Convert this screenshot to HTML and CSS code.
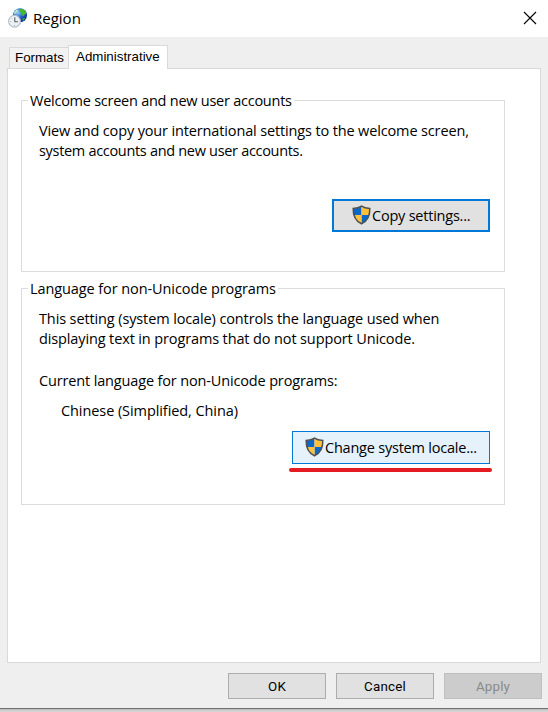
FILE: index.html
```html
<!DOCTYPE html>
<html lang="en">
<head>
<meta charset="utf-8">
<title>Region</title>
<link rel="stylesheet" href="styles.css">
</head>
<body>
<svg width="0" height="0" class="defs" aria-hidden="true">
  <defs>
    <clipPath id="shield-clip"><path d="M9.500 1.200C7.500 2.700 4.500 3.500 1.200 3.500C1 10.500 3 15.800 9.500 18.800C16 15.800 18 10.500 17.800 3.500C14.500 3.500 11.500 2.700 9.500 1.200Z"/></clipPath>
    <symbol id="shield" viewBox="0 0 19 20">
      <g clip-path="url(#shield-clip)">
        <path fill="#0b67c9" d="M0 0h9.500v10H0zM9.500 10H19v10H9.500z"/>
        <path fill="#ffc03c" d="M9.500 0H19v10H9.500zM0 10h9.500v10H0z"/>
      </g>
      <path fill="none" stroke="#4e5052" stroke-width="1.500" d="M9.500 1.200C7.500 2.700 4.500 3.500 1.200 3.500C1 10.500 3 15.800 9.500 18.800C16 15.800 18 10.500 17.800 3.500C14.500 3.500 11.500 2.700 9.500 1.200Z"/>
    </symbol>
  </defs>
</svg>
<div class="window">
  <header class="titlebar">
    <svg class="app-icon" viewBox="0 0 20 20" width="20" height="20">
      <defs>
        <radialGradient id="sea" cx=".35" cy=".3" r=".75"><stop offset="0" stop-color="#8fd0f5"/><stop offset=".5" stop-color="#2465cf"/><stop offset="1" stop-color="#102a86"/></radialGradient>
      </defs>
      <circle cx="12" cy="7.300" r="7" fill="url(#sea)"/>
      <path fill="#48b838" d="M12 .9c2.500-.4 4.500.7 5.600 2.500l.8 2.500-1.600.4-1.400 2-1.700-1.200-.3-2.200-1.900-1.200.5-1.400z"/>
      <path fill="#b5e5d0" d="M6 4.500l2.500-2.800 2 .3-1.700 2.500-2.300 2z"/>
      <path fill="#39a24a" d="M14 11l2-1.200 1.200.6-2 2.600z"/>
      <circle cx="6.500" cy="13.200" r="5.900" fill="#edf1f4" stroke="#b3bdc4" stroke-width="1.100"/>
      <path fill="none" stroke="#56626b" stroke-width="1.100" d="M6.800 9.200v4.500h3.200"/>
      <path fill="none" stroke="#94a0a8" stroke-width=".8" d="M2.200 13.400h1M6.500 17v1M3.500 10l.6.600"/>
    </svg>
    <h1 class="title"><span class="t-title">Region</span></h1>
    <svg class="close" viewBox="0 0 14 14" width="14" height="14"><path d="M1 1l12 12M13 1L1 13"/></svg>
  </header>
  <nav class="tabs">
    <div class="tab t-formats">Formats</div>
    <div class="tab active t-admin">Administrative</div>
  </nav>
  <main class="page">
    <section class="group welcome">
      <h2 class="legend t-l1">Welcome screen and new user accounts</h2>
      <p><span class="t-view">View and copy your international settings to the welcome screen,</span><br><span class="t-sys">system accounts and new user accounts.</span></p>
      <div class="action"><button class="btn focus"><svg width="19" height="20"><use href="#shield"/></svg><span class="t-copy">Copy settings...</span></button></div>
    </section>
    <section class="group language">
      <h2 class="legend t-l2">Language for non-Unicode programs</h2>
      <p><span class="t-this">This setting (system locale) controls the language used when</span><br><span class="t-disp">displaying text in programs that do not support Unicode.</span></p>
      <p class="current"><span class="t-cur">Current language for non-Unicode programs:</span></p>
      <p class="value"><span class="t-chi">Chinese (Simplified, China)</span></p>
      <div class="action"><button class="btn hover"><svg width="19" height="20"><use href="#shield"/></svg><span class="t-change">Change system locale...</span></button></div>
      <div class="marker"></div>
    </section>
  </main>
  <footer class="footer">
    <button class="cmd">OK</button>
    <button class="cmd">Cancel</button>
    <button class="cmd" disabled>Apply</button>
  </footer>
</div>
<div class="shadow"></div>
</body>
</html>
```
FILE: styles.css
```css
* { box-sizing: border-box; }
body { margin: 0; width: 548px; height: 712px; overflow: hidden; background: #d8d8d8; color: #000; font: 14.5px/20px "Open Sans", "Noto Sans", sans-serif; }
.defs { position: absolute; }
h1, h2, p { margin: 0; font-size: inherit; font-weight: 400; }
span, h2 { white-space: nowrap; }
.window { height: 709px; background: #efefef; border-bottom: 1px solid #707070; display: flex; flex-direction: column; }
.shadow { height: 3px; background: linear-gradient(#bdbdbd, #dadada); }
.titlebar { height: 37px; flex: none; background: #fff; display: flex; align-items: center; padding: 0 11px 0 8px; }
.app-icon { margin-top: -1px; }
.title { margin-left: 5px; flex: 1; }
.close { margin-top: -1px; }
.close path { fill: none; stroke: #000; stroke-width: 1.1; }
.tabs { height: 31px; flex: none; display: flex; align-items: flex-end; padding-left: 9px; font: 13.33px/20px "Liberation Sans", Arial, sans-serif; }
.tab { height: 21px; width: 59px; border: 1px solid #d9d9d9; border-width: 1px 0 0 1px; background: #f2f2f2; padding-left: 5px; white-space: nowrap; }
.tab.active { height: 24px; width: 100px; margin-bottom: -1px; background: #fff; border-width: 1px 1px 0; padding-left: 7px; line-height: 21px; position: relative; }
.page { width: 534px; height: 595px; flex: none; margin-left: 7px; padding: 32px 35px 0 13px; border: 1px solid #d9d9d9; background: #fff; }
.group { border: 1px solid #dcdcdc; padding: 0 14px 0 17px; }
.welcome { width: 484px; height: 172px; margin-top: -1px; }
.language { width: 484px; height: 217px; margin-top: 16px; }
.legend { width: max-content; margin: -10px 0 10px -11px; padding: 0 2px; background: #fff; }
.current { margin-top: 22px; }
.value { margin: 10px 0 0 22px; }
.action { display: flex; justify-content: flex-end; }
.welcome .action { margin-top: 38px; }
.language .action { margin-top: 10px; }
.btn { height: 33px; display: flex; align-items: center; padding: 0; font: inherit; color: #000; }
.focus { width: 158px; border: 2px solid #0078d7; background: #e1e1e1; padding-left: 18px; }
.hover { width: 198px; border: 1px solid #0078d7; background: #e5f1fb; padding-left: 12px; }
.btn svg { flex: none; margin: -1px 1px 0 0; }
.btn span { padding-top: 1px; }
.t-title { font-size: 15px; }
.t-l1 { letter-spacing: -.25px; }
.t-view { letter-spacing: -.14px; }
.t-sys { letter-spacing: -.31px; }
.t-l2 { letter-spacing: -.09px; }
.t-this { letter-spacing: -.12px; }
.t-disp { letter-spacing: -.125px; }
.t-cur { letter-spacing: -.15px; }
.t-chi { letter-spacing: -.08px; }
.t-copy { letter-spacing: -.22px; }
.t-change { letter-spacing: -.22px; }
.marker { width: 203px; height: 4px; margin: 4px 0 0 250px; background: #e41b23; border-radius: 2px; }
.footer { display: flex; gap: 10px; padding: 10px 6px 0 0; justify-content: flex-end; }
.cmd { width: 98px; height: 26px; padding: 1px 0 0; border: 1px solid #adadad; background: #e1e1e1; color: #000; font: 13.33px/20px Roboto, sans-serif; letter-spacing: .2px; }
.cmd:disabled { background: #ccc; border-color: #bfbfbf; color: #8a8a8a; }
```
